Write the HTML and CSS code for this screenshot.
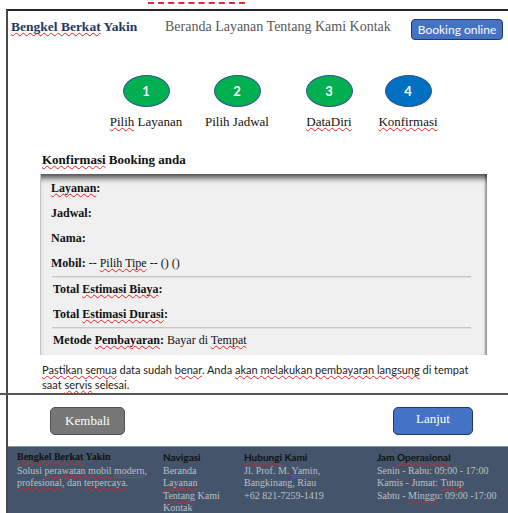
FILE: index.html
```html
<!DOCTYPE html>
<html lang="id">
<head>
<meta charset="utf-8">
<title>Bengkel Berkat Yakin - Konfirmasi Booking</title>
<link rel="stylesheet" href="styles.css">
</head>
<body>
<div class="spell-mark"></div>
<div class="page">
  <header class="topbar">
    <div class="brand"><span class="sp">Bengkel Berkat</span> Yakin</div>
    <nav class="menu">Beranda Layanan Tentang Kami Kontak</nav>
    <a class="book">Booking online</a>
  </header>

  <ol class="steps">
    <li class="step"><span class="dot">1</span><span class="lbl"><span class="sp">Pilih</span> Layanan</span></li>
    <li class="step"><span class="dot">2</span><span class="lbl">Pilih Jadwal</span></li>
    <li class="step"><span class="dot">3</span><span class="lbl"><span class="sp">DataDiri</span></span></li>
    <li class="step current"><span class="dot">4</span><span class="lbl"><span class="sp">Konfirmasi</span></span></li>
  </ol>

  <section class="confirm">
    <h2 class="title"><span class="sp">Konfirmasi</span> Booking anda</h2>
    <div class="summary">
      <div class="row"><span class="sp">Layanan</span>:</div>
      <div class="row">Jadwal:</div>
      <div class="row">Nama:</div>
      <div class="row">Mobil: <span class="v">-- <span class="sp">Pilih Tipe</span> -- () ()</span></div>
      <div class="sep"></div>
      <div class="row shift">Total <span class="sp">Estimasi Biaya</span>:</div>
      <div class="row shift">Total <span class="sp">Estimasi Durasi</span>:</div>
      <div class="sep"></div>
      <div class="row shift">Metode <span class="sp">Pembayaran</span>: <span class="v">Bayar di <span class="sp">Tempat</span></span></div>
    </div>
    <p class="note"><span class="sp">Pastikan semua</span> data sudah <span class="sp">benar</span>. Anda <span class="sp">akan melakukan pembayaran langsung</span> di tempat saat <span class="sp">servis</span> selesai.</p>
  </section>

  <hr class="rule">

  <div class="actions">
    <a class="btn back">Kembali</a>
    <a class="btn next">Lanjut</a>
  </div>

  <footer class="foot">
    <div class="col">
      <div class="fh serif"><span class="sp">Bengkel Berkat</span> Yakin</div>
      <div>Solusi <span class="sp">perawatan mobil</span> <span class="gr">modern,</span> <span class="sp">profesional</span>, dan <span class="sp">terpercaya</span>.</div>
    </div>
    <div class="col">
      <div class="fh">Navigasi</div>
      <div>Beranda</div>
      <div><span class="sp">Layanan</span></div>
      <div><span class="sp">Tentang</span> Kami</div>
      <div>Kontak</div>
    </div>
    <div class="col">
      <div class="fh"><span class="sp">Hubungi</span> Kami</div>
      <div>Jl. Prof. M. <span class="gr">Yamin,</span></div>
      <div>Bangkinang, Riau</div>
      <div>+62 821-7259-1419</div>
    </div>
    <div class="col">
      <div class="fh">Jam <span class="sp">Operasional</span></div>
      <div>Senin - Rabu: 09:00 - 17:00</div>
      <div>Kamis - Jumat: <span class="sp">Tutup</span></div>
      <div>Sabtu - <span class="sp">Minggu</span>: 09:00 -17:00</div>
    </div>
  </footer>
</div>
</body>
</html>
```

FILE: styles.css
```css
html, body {
  margin: 0;
  padding: 0;
}

body {
  background: #fff;
  color: #111;
  font-family: "Liberation Serif", "Times New Roman", serif;
  height: 513px;
  overflow: hidden;
}

/* spell-check squiggles */
.sp {
  text-decoration: underline wavy #e02424;
  text-decoration-thickness: 1px;
  text-underline-offset: 1px;
  text-decoration-skip-ink: none;
}

.gr {
  text-decoration: underline double #2f62d8;
  text-decoration-thickness: 1px;
  text-underline-offset: 1px;
}

.spell-mark {
  margin-left: 148px;
  width: 97px;
  height: 2px;
  border-bottom: 2px dashed #d63030;
}

.page {
  margin: 5px 0 0 6px;
  border-top: 2px solid #262626;
  border-left: 2px solid #4a4a4a;
}

/* header */
.topbar {
  display: flex;
  align-items: center;
  height: 36px;
  padding: 0 5px 0 3px;
}

.brand {
  width: 154px;
  font-weight: bold;
  font-size: 13.5px;
  color: #1f3864;
  margin-bottom: 4px;
}

.menu {
  font-size: 14px;
  color: #595959;
  margin-bottom: 4px;
}

.book {
  margin-left: auto;
  width: 92px;
  height: 21px;
  box-sizing: border-box;
  background: #4472c4;
  border: 1.5px solid #1f3864;
  border-radius: 4px;
  color: #fff;
  font-family: Lato, "Liberation Sans", sans-serif;
  font-size: 12px;
  display: flex;
  align-items: center;
  justify-content: center;
}

/* progress steps */
.steps {
  list-style: none;
  margin: 0;
  padding: 28px 0 0 93px;
  display: grid;
  grid-template-columns: 90px 92px 92px 66px;
}

.step {
  display: flex;
  flex-direction: column;
  align-items: center;
}

.dot {
  width: 47px;
  height: 32px;
  box-sizing: border-box;
  border-radius: 50%;
  background: #00b050;
  border: 1.5px solid #2f5597;
  color: #fff;
  font-family: Lato, "Liberation Sans", sans-serif;
  font-weight: bold;
  font-size: 13px;
  display: flex;
  align-items: center;
  justify-content: center;
}

.step.current .dot {
  background: #0070c0;
}

.lbl {
  margin-top: 7px;
  font-size: 13px;
  line-height: 16px;
  white-space: nowrap;
}

/* confirmation block */
.confirm {
  padding-left: 32px;
}

.title {
  margin: 22px 0 6px 2px;
  font-size: 13px;
  line-height: 16px;
  font-weight: bold;
}

.summary {
  width: 447px;
  height: 181px;
  box-sizing: border-box;
  background: #f0f0f0;
  border-left: 1px solid #c4c4c4;
  box-shadow: inset 0 8px 6px -4px rgba(0, 0, 0, 0.7),
              inset -3px 0 2px -1px rgba(0, 0, 0, 0.35);
  padding: 2px 0 0 10px;
}

.row {
  font-size: 12px;
  line-height: 25px;
  font-weight: bold;
  white-space: nowrap;
}

.row.shift {
  padding-left: 2px;
}

.row .v {
  font-weight: normal;
}

.sep {
  width: 419px;
  height: 1px;
  margin-left: 1px;
  background: #c6c6c6;
  box-shadow: 0 1px 0 #e0e0e0;
}

.note {
  margin: 7px 0 0 2px;
  width: 432px;
  font-family: Lato, "Liberation Sans", sans-serif;
  font-size: 11px;
  line-height: 15px;
  color: #222;
}

.rule {
  margin: 1px 0 0 -8px;
  width: calc(100% + 8px);
  height: 2px;
  border: 0;
  background: #555;
}

/* navigation buttons */
.actions {
  display: flex;
  justify-content: space-between;
  padding: 12px 35px 0 42px;
}

.btn {
  height: 28px;
  box-sizing: border-box;
  border-radius: 5px;
  color: #fff;
  font-size: 13px;
  display: flex;
  align-items: center;
  justify-content: center;
}

.back {
  width: 75px;
  background: #777;
  border: 1.5px solid #505050;
}

.next {
  width: 80px;
  background: #4472c4;
  border: 1.5px solid #1f3864;
  padding-bottom: 5px;
}

/* footer */
.foot {
  margin-top: 11px;
  height: 70px;
  box-sizing: border-box;
  background: #44546a;
  border-top: 1px solid #8593a8;
  padding: 4px 0 0 9px;
  display: grid;
  grid-template-columns: 146px 81px 133px 1fr;
  font-size: 10px;
  line-height: 12.5px;
  color: #bcc0c6;
}

.col {
  white-space: nowrap;
}

.col:first-child {
  white-space: normal;
  padding-right: 6px;
}

.fh {
  font-family: Lato, "Liberation Sans", sans-serif;
  font-weight: bold;
  color: #111;
  margin-bottom: 1px;
}

.fh.serif {
  font-family: "Liberation Serif", "Times New Roman", serif;
}
```
